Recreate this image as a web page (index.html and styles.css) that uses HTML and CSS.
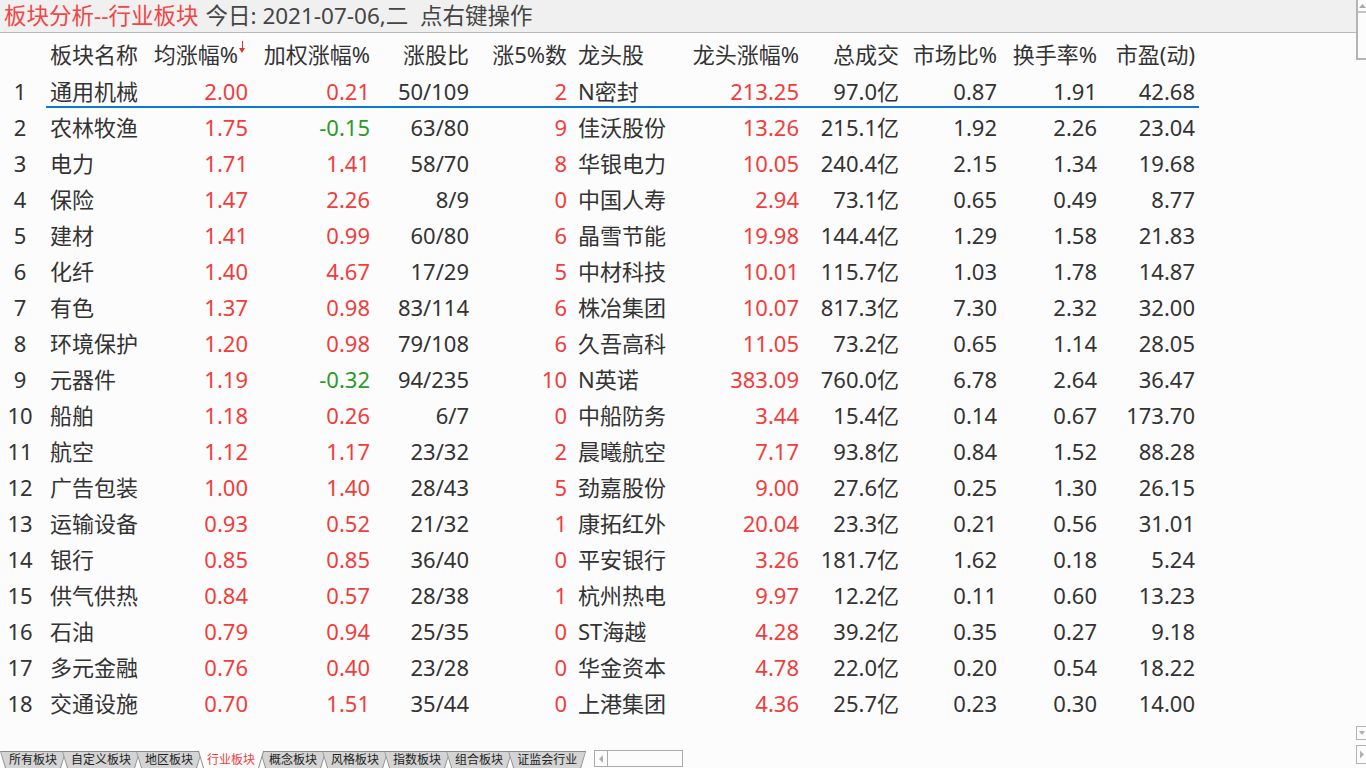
FILE: index.html
```html
<!DOCTYPE html>
<html lang="zh-CN">
<head>
<meta charset="utf-8">
<title>板块分析--行业板块</title>
<link rel="stylesheet" href="styles.css">
</head>
<body>
<div class="page">
  <div class="main">
    <div class="titlebar">
      <span class="t-red">板块分析--行业板块</span><span class="t-dark">今日: 2021-07-06,二&nbsp; 点右键操作</span>
    </div>
    <div class="grid">
      <div class="row head">
        <span class="idx"></span>
        <span class="name">板块名称</span>
        <span class="num sort">均涨幅%<i class="arrow"></i></span>
        <span class="num">加权涨幅%</span>
        <span class="num">涨股比</span>
        <span class="num">涨5%数</span>
        <span class="stock">龙头股</span>
        <span class="num">龙头涨幅%</span>
        <span class="num">总成交</span>
        <span class="num">市场比%</span>
        <span class="num">换手率%</span>
        <span class="num">市盈(动)</span>
      </div>
      <div class="row sel"><span class="idx">1</span><span class="name">通用机械</span><span class="num up">2.00</span><span class="num up">0.21</span><span class="num">50/109</span><span class="num up">2</span><span class="stock">N密封</span><span class="num up">213.25</span><span class="num">97.0亿</span><span class="num">0.87</span><span class="num">1.91</span><span class="num">42.68</span></div>
      <div class="row"><span class="idx">2</span><span class="name">农林牧渔</span><span class="num up">1.75</span><span class="num dn">-0.15</span><span class="num">63/80</span><span class="num up">9</span><span class="stock">佳沃股份</span><span class="num up">13.26</span><span class="num">215.1亿</span><span class="num">1.92</span><span class="num">2.26</span><span class="num">23.04</span></div>
      <div class="row"><span class="idx">3</span><span class="name">电力</span><span class="num up">1.71</span><span class="num up">1.41</span><span class="num">58/70</span><span class="num up">8</span><span class="stock">华银电力</span><span class="num up">10.05</span><span class="num">240.4亿</span><span class="num">2.15</span><span class="num">1.34</span><span class="num">19.68</span></div>
      <div class="row"><span class="idx">4</span><span class="name">保险</span><span class="num up">1.47</span><span class="num up">2.26</span><span class="num">8/9</span><span class="num up">0</span><span class="stock">中国人寿</span><span class="num up">2.94</span><span class="num">73.1亿</span><span class="num">0.65</span><span class="num">0.49</span><span class="num">8.77</span></div>
      <div class="row"><span class="idx">5</span><span class="name">建材</span><span class="num up">1.41</span><span class="num up">0.99</span><span class="num">60/80</span><span class="num up">6</span><span class="stock">晶雪节能</span><span class="num up">19.98</span><span class="num">144.4亿</span><span class="num">1.29</span><span class="num">1.58</span><span class="num">21.83</span></div>
      <div class="row"><span class="idx">6</span><span class="name">化纤</span><span class="num up">1.40</span><span class="num up">4.67</span><span class="num">17/29</span><span class="num up">5</span><span class="stock">中材科技</span><span class="num up">10.01</span><span class="num">115.7亿</span><span class="num">1.03</span><span class="num">1.78</span><span class="num">14.87</span></div>
      <div class="row"><span class="idx">7</span><span class="name">有色</span><span class="num up">1.37</span><span class="num up">0.98</span><span class="num">83/114</span><span class="num up">6</span><span class="stock">株冶集团</span><span class="num up">10.07</span><span class="num">817.3亿</span><span class="num">7.30</span><span class="num">2.32</span><span class="num">32.00</span></div>
      <div class="row"><span class="idx">8</span><span class="name">环境保护</span><span class="num up">1.20</span><span class="num up">0.98</span><span class="num">79/108</span><span class="num up">6</span><span class="stock">久吾高科</span><span class="num up">11.05</span><span class="num">73.2亿</span><span class="num">0.65</span><span class="num">1.14</span><span class="num">28.05</span></div>
      <div class="row"><span class="idx">9</span><span class="name">元器件</span><span class="num up">1.19</span><span class="num dn">-0.32</span><span class="num">94/235</span><span class="num up">10</span><span class="stock">N英诺</span><span class="num up">383.09</span><span class="num">760.0亿</span><span class="num">6.78</span><span class="num">2.64</span><span class="num">36.47</span></div>
      <div class="row"><span class="idx">10</span><span class="name">船舶</span><span class="num up">1.18</span><span class="num up">0.26</span><span class="num">6/7</span><span class="num up">0</span><span class="stock">中船防务</span><span class="num up">3.44</span><span class="num">15.4亿</span><span class="num">0.14</span><span class="num">0.67</span><span class="num">173.70</span></div>
      <div class="row"><span class="idx">11</span><span class="name">航空</span><span class="num up">1.12</span><span class="num up">1.17</span><span class="num">23/32</span><span class="num up">2</span><span class="stock">晨曦航空</span><span class="num up">7.17</span><span class="num">93.8亿</span><span class="num">0.84</span><span class="num">1.52</span><span class="num">88.28</span></div>
      <div class="row"><span class="idx">12</span><span class="name">广告包装</span><span class="num up">1.00</span><span class="num up">1.40</span><span class="num">28/43</span><span class="num up">5</span><span class="stock">劲嘉股份</span><span class="num up">9.00</span><span class="num">27.6亿</span><span class="num">0.25</span><span class="num">1.30</span><span class="num">26.15</span></div>
      <div class="row"><span class="idx">13</span><span class="name">运输设备</span><span class="num up">0.93</span><span class="num up">0.52</span><span class="num">21/32</span><span class="num up">1</span><span class="stock">康拓红外</span><span class="num up">20.04</span><span class="num">23.3亿</span><span class="num">0.21</span><span class="num">0.56</span><span class="num">31.01</span></div>
      <div class="row"><span class="idx">14</span><span class="name">银行</span><span class="num up">0.85</span><span class="num up">0.85</span><span class="num">36/40</span><span class="num up">0</span><span class="stock">平安银行</span><span class="num up">3.26</span><span class="num">181.7亿</span><span class="num">1.62</span><span class="num">0.18</span><span class="num">5.24</span></div>
      <div class="row"><span class="idx">15</span><span class="name">供气供热</span><span class="num up">0.84</span><span class="num up">0.57</span><span class="num">28/38</span><span class="num up">1</span><span class="stock">杭州热电</span><span class="num up">9.97</span><span class="num">12.2亿</span><span class="num">0.11</span><span class="num">0.60</span><span class="num">13.23</span></div>
      <div class="row"><span class="idx">16</span><span class="name">石油</span><span class="num up">0.79</span><span class="num up">0.94</span><span class="num">25/35</span><span class="num up">0</span><span class="stock">ST海越</span><span class="num up">4.28</span><span class="num">39.2亿</span><span class="num">0.35</span><span class="num">0.27</span><span class="num">9.18</span></div>
      <div class="row"><span class="idx">17</span><span class="name">多元金融</span><span class="num up">0.76</span><span class="num up">0.40</span><span class="num">23/28</span><span class="num up">0</span><span class="stock">华金资本</span><span class="num up">4.78</span><span class="num">22.0亿</span><span class="num">0.20</span><span class="num">0.54</span><span class="num">18.22</span></div>
      <div class="row"><span class="idx">18</span><span class="name">交通设施</span><span class="num up">0.70</span><span class="num up">1.51</span><span class="num">35/44</span><span class="num up">0</span><span class="stock">上港集团</span><span class="num up">4.36</span><span class="num">25.7亿</span><span class="num">0.23</span><span class="num">0.30</span><span class="num">14.00</span></div>
    </div>
    <div class="tabbar">
      <div class="tabs">
        <span class="tab t1"><b>所有板块</b></span>
        <span class="tab t2"><b>自定义板块</b></span>
        <span class="tab t3"><b>地区板块</b></span>
        <span class="tab t4 active"><b>行业板块</b></span>
        <span class="tab t5"><b>概念板块</b></span>
        <span class="tab t6"><b>风格板块</b></span>
        <span class="tab t7"><b>指数板块</b></span>
        <span class="tab t8"><b>组合板块</b></span>
        <span class="tab t9"><b>证监会行业</b></span>
      </div>
      <div class="hscroll">
        <span class="hbtn"><svg width="5" height="8" viewBox="0 0 5 8"><path d="M4 0 L0 4 L4 8 Z" fill="#b0b0b0"/></svg></span>
      </div>
    </div>
  </div>
  <div class="vscroll">
    <div class="vtop">
      <svg width="9" height="6" viewBox="0 0 9 6"><path d="M1 5 L4.5 1 L8 5 Z" fill="#a8a8a8"/></svg>
      <div class="vline"></div>
    </div>
    <div class="vspace"></div>
    <div class="vbtn down"><svg width="8" height="6" viewBox="0 0 8 6"><path d="M1 1 L7 1 L4 5 Z" fill="#b0b0b0"/></svg></div>
    <div class="vbtn right"><svg width="6" height="9" viewBox="0 0 6 9"><path d="M1 0.5 L5 4.5 L1 8.5 Z" fill="#b0b0b0"/></svg></div>
  </div>
</div>
</body>
</html>
```

FILE: styles.css
```css
html, body {
  margin: 0;
  padding: 0;
  background: #fcfcfc;
}
body {
  font-family: "Noto Sans", "Noto Sans CJK SC", sans-serif;
  color: #333;
  width: 1366px;
  height: 768px;
  overflow: hidden;
}
.page {
  display: flex;
  height: 768px;
}
.main {
  width: 1356px;
  display: flex;
  flex-direction: column;
}
.titlebar {
  height: 32px;
  background: #f0f0f0;
  border-bottom: 1px solid #b9b9b9;
  font-size: 22.5px;
  line-height: 31px;
  padding-left: 4px;
  white-space: nowrap;
}
.t-red { color: #f24545; margin-right: 7px; }
.t-dark { color: #444; }

.grid {
  margin-top: 3px;
  flex: 1;
}
.row {
  display: grid;
  grid-template-columns: 50px 100px 98px 122px 99px 98px 123px 109px 100px 98px 100px 98px;
  height: 36px;
  line-height: 36px;
  font-size: 22px;
  white-space: nowrap;
  position: relative;
}
.row.head {
  height: 37px;
  line-height: 37px;
}
.idx {
  text-align: center;
  padding-right: 10px;
}
.name { text-align: left; }
.num { text-align: right; }
.stock { padding-left: 11px; }
.up { color: #f23c3c; }
.dn { color: #2a9b2a; }

.sort {
  display: flex;
  justify-content: flex-end;
  align-items: stretch;
}
.arrow {
  position: relative;
  width: 10px;
  height: 37px;
}
.arrow::before {
  content: "";
  position: absolute;
  left: 3.5px;
  top: 5px;
  width: 1px;
  height: 9px;
  background: #e53030;
}
.arrow::after {
  content: "";
  position: absolute;
  left: 1px;
  top: 12px;
  border-left: 3px solid transparent;
  border-right: 3px solid transparent;
  border-top: 5px solid #e53030;
}
.row.sel::after {
  content: "";
  position: absolute;
  left: 46px;
  width: 1153px;
  top: 33px;
  height: 1.5px;
  background: #0a78d4;
}

.tabbar {
  height: 18px;
  display: flex;
  align-items: flex-end;
  font-family: "Noto Sans CJK SC", sans-serif;
  font-size: 12px;
}
.tabs {
  display: flex;
  height: 17px;
}
.tab {
  position: relative;
  height: 17px;
  line-height: 16px;
  padding: 0 9px;
  margin-right: -4px;
  color: #222;
}
.tab b {
  font-weight: normal;
  position: relative;
}
.tab::before,
.tab::after {
  content: "";
  position: absolute;
  z-index: -1;
}
.tab::before {
  inset: 0;
  background: #8c8c8c;
  clip-path: polygon(0 0, 100% 0, calc(100% - 5px) 100%, 5px 100%);
}
.tab::after {
  left: 1px;
  right: 1px;
  top: 1px;
  bottom: 0;
  background: #d4d4d4;
  clip-path: polygon(0 0, 100% 0, calc(100% - 5px) 100%, 5px 100%);
}
.t1 { z-index: 1; }
.t2 { z-index: 2; }
.t3 { z-index: 3; }
.t4 { z-index: 4; }
.t5 { z-index: 5; }
.t6 { z-index: 6; }
.t7 { z-index: 7; }
.t8 { z-index: 8; }
.t9 { z-index: 9; }
.tab.active { z-index: 20; color: #f23c3c; }
.tab.active::after { background: #fcfcfc; top: 0; }

.hscroll {
  margin-left: 12px;
  width: 87px;
  height: 15px;
  border: 1px solid #aaa;
  margin-bottom: 1px;
  display: flex;
  background: #fcfcfc;
}
.hbtn {
  width: 12px;
  border-right: 1px solid #aaa;
  display: flex;
  align-items: center;
  justify-content: center;
}

.vscroll {
  width: 10px;
  display: flex;
  flex-direction: column;
}
.vtop {
  height: 60px;
  border-left: 2px solid #b4b4b4;
  border-bottom: 2px solid #b4b4b4;
  display: flex;
  flex-direction: column;
  align-items: center;
  padding-top: 3px;
  box-sizing: border-box;
}
.vline {
  width: 100%;
  height: 2px;
  background: #c4c4c4;
  margin-top: 2px;
}
.vspace { flex: 1; }
.vbtn {
  border: 1px solid #b4b4b4;
  border-right: none;
  display: flex;
  align-items: center;
  justify-content: center;
}
.vbtn.down { height: 12px; margin-bottom: 5px; }
.vbtn.right { height: 17px; margin-bottom: 4px; }
```
